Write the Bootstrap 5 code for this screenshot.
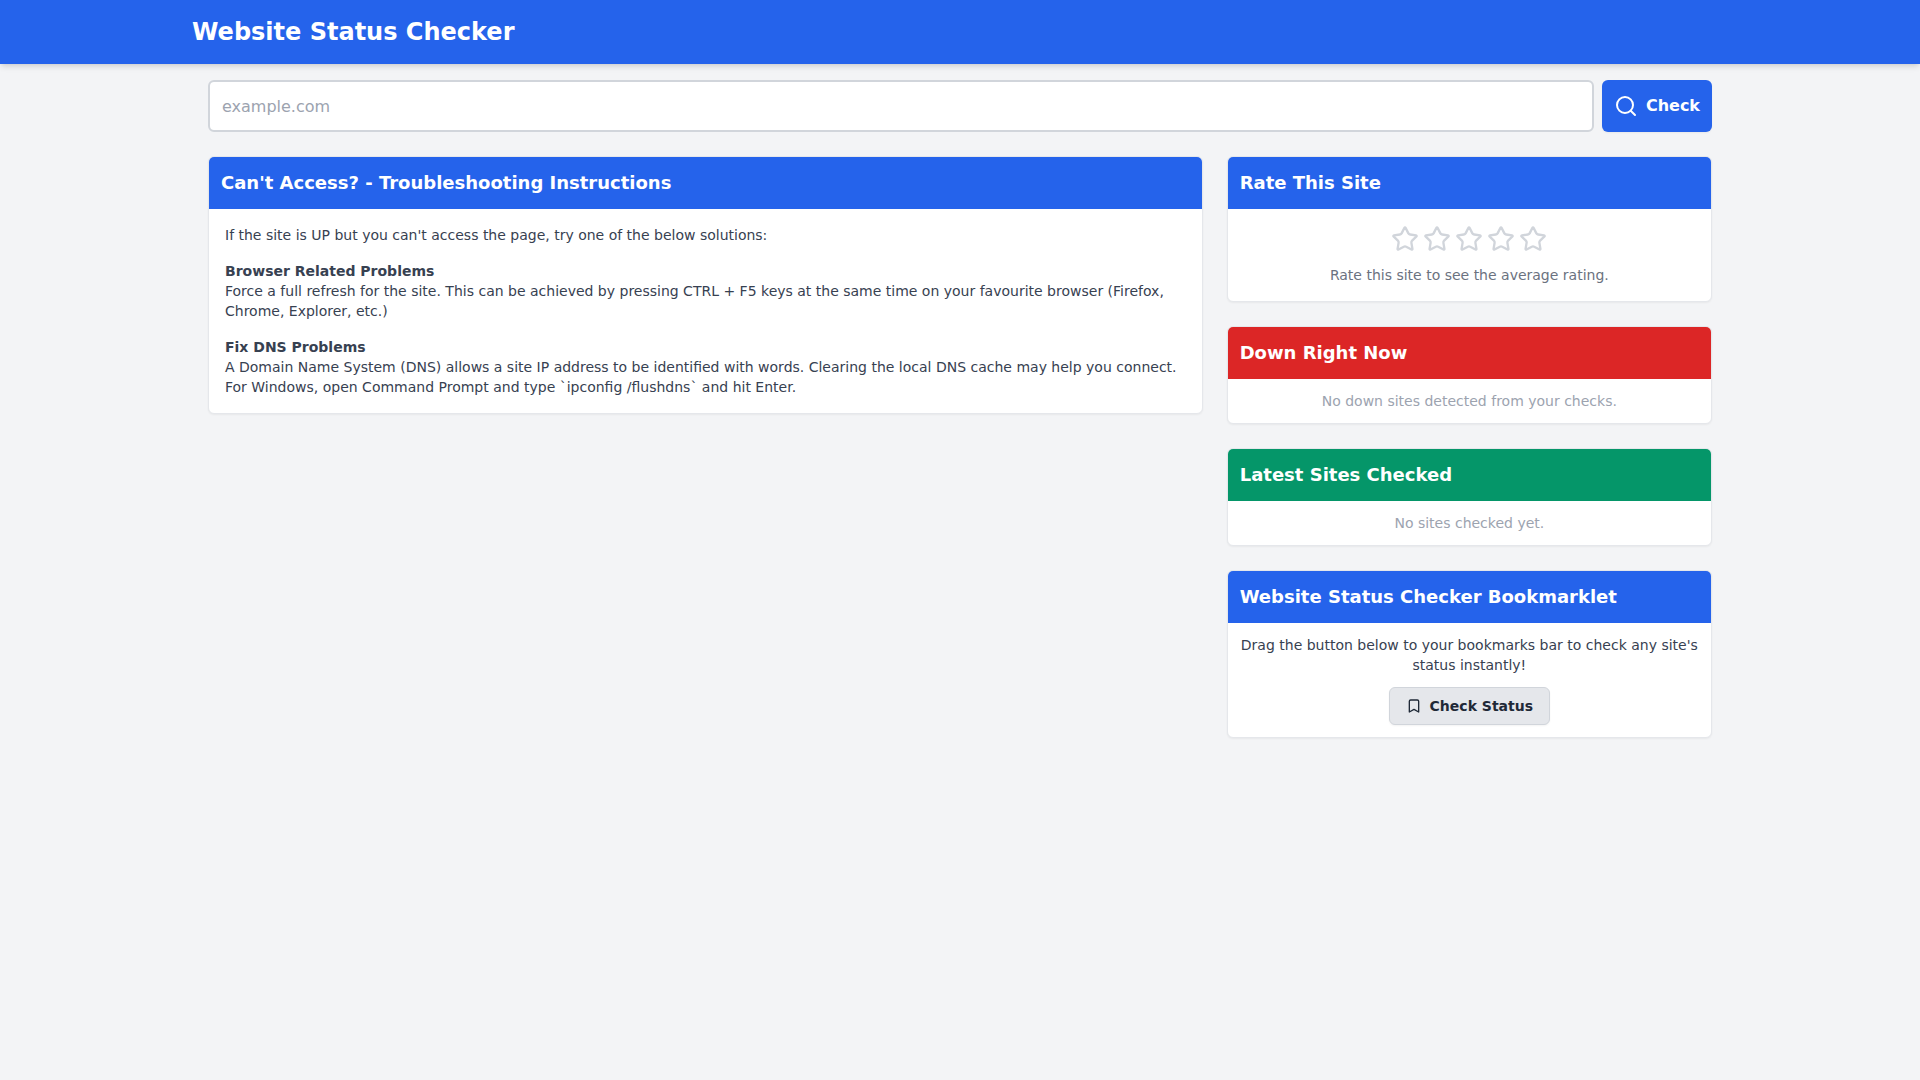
<!DOCTYPE html>
<html lang="en">
<head>
<meta charset="utf-8">
<meta name="viewport" content="width=device-width, initial-scale=1">
<title>Website Status Checker</title>
<link href="https://cdn.jsdelivr.net/npm/bootstrap@5.3.0/dist/css/bootstrap.min.css" rel="stylesheet">
<style>
:root { --brand: #2563eb; --line: #e5e7eb; }
body { background: #f3f4f6; color: #374151; font-family: "DejaVu Sans", sans-serif; font-size: 14px; line-height: 20px; }
.site-header { background: var(--brand); box-shadow: 0 4px 6px -1px rgba(0,0,0,.1), 0 2px 4px -2px rgba(0,0,0,.1); }
.site-wrap { max-width: 1536px; }
.site-title { font-size: 24px; line-height: 32px; }
.site-input { border: 2px solid #d1d5db; border-radius: 6px; padding: 12px; font-size: 16px; line-height: normal; }
.site-input::placeholder { color: #9ca3af; }
.btn-check-site { --bs-btn-bg: var(--brand); --bs-btn-color: #fff; --bs-btn-hover-bg: #1d4ed8; --bs-btn-hover-color: #fff; border: 0; border-radius: 6px; padding: 14px 12px; font-size: 16px; line-height: 24px; box-shadow: 0 1px 2px rgba(0,0,0,.05); }
.site-grid { --bs-gutter-x: 24px; --bs-gutter-y: 24px; }
.panel { --bs-card-border-color: var(--line); --bs-card-border-radius: 6px; --bs-card-inner-border-radius: 5px; --bs-card-color: #374151; box-shadow: 0 1px 2px rgba(0,0,0,.05); }
.panel-title { padding: 12px; font-size: 18px; line-height: 28px; color: #fff; background: var(--brand); border-radius: 5px 5px 0 0; }
.panel-title.is-down { background: #dc2626; }
.panel-title.is-latest { background: #059669; }
.pad-sm { padding: 12px; }
.star-row { gap: 4px; margin-bottom: 12px; color: #d1d5db; }
.star-btn { color: inherit; line-height: 0; }
.text-soft { color: #9ca3af; }
.text-hint { color: #6b7280; }
.btn-mark { --bs-btn-bg: #e5e7eb; --bs-btn-color: #1f2937; --bs-btn-border-color: #d1d5db; --bs-btn-hover-bg: #d1d5db; --bs-btn-hover-color: #1f2937; border-radius: 6px; padding: 8px 16px; font-size: 14px; line-height: 20px; box-shadow: 0 1px 2px rgba(0,0,0,.05); }
.line-icon { fill: none; stroke: currentColor; stroke-width: 2; stroke-linecap: round; stroke-linejoin: round; }
</style>
</head>
<body>
<svg class="d-none" aria-hidden="true">
  <symbol id="star" viewBox="0 0 24 24"><path d="M11.525 2.295a.53.53 0 0 1 .95 0l2.31 4.679a2.123 2.123 0 0 0 1.595 1.16l5.166.756a.53.53 0 0 1 .294.904l-3.736 3.638a2.123 2.123 0 0 0-.611 1.878l.882 5.14a.53.53 0 0 1-.771.56l-4.618-2.428a2.122 2.122 0 0 0-1.973 0L6.396 21.01a.53.53 0 0 1-.77-.56l.881-5.139a2.122 2.122 0 0 0-.611-1.879L2.16 9.795a.53.53 0 0 1 .294-.906l5.165-.755a2.122 2.122 0 0 0 1.597-1.16z"/></symbol>
</svg>
<header class="site-header py-3">
  <div class="site-wrap container-fluid px-0">
    <h1 class="site-title fw-bold text-white mb-0">Website Status Checker</h1>
  </div>
</header>
<main class="site-wrap container-fluid p-3">
  <form class="d-flex gap-2 mb-4" onsubmit="return false">
    <input class="form-control site-input" id="site" type="text" placeholder="example.com" aria-label="Website address">
    <button class="btn btn-check-site d-flex align-items-center gap-2 fw-bold" type="submit">
      <svg class="line-icon" width="24" height="24" viewBox="0 0 24 24" aria-hidden="true"><circle cx="11" cy="11" r="8"/><path d="m21 21-4.300-4.300"/></svg>
      Check
    </button>
  </form>
  <div class="row site-grid">
    <div class="col-lg-8">
      <section class="card panel">
        <h2 class="panel-title fw-bold mb-0">Can't Access? - Troubleshooting Instructions</h2>
        <div class="card-body">
          <p>If the site is UP but you can't access the page, try one of the below solutions:</p>
          <p><strong>Browser Related Problems</strong><br>Force a full refresh for the site. This can be achieved by pressing CTRL + F5 keys at the same time on your favourite browser (Firefox, Chrome, Explorer, etc.)</p>
          <p class="mb-0"><strong>Fix DNS Problems</strong><br>A Domain Name System (DNS) allows a site IP address to be identified with words. Clearing the local DNS cache may help you connect. For Windows, open Command Prompt and type `ipconfig /flushdns` and hit Enter.</p>
        </div>
      </section>
    </div>
    <div class="col-lg-4 d-flex flex-column gap-4">
      <section class="card panel">
        <h2 class="panel-title fw-bold mb-0">Rate This Site</h2>
        <div class="card-body text-center">
          <div class="star-row d-flex justify-content-center">
            <button class="star-btn btn p-0 border-0" type="button" aria-label="1 star"><svg class="line-icon" width="28" height="28"><use href="#star"/></svg></button>
            <button class="star-btn btn p-0 border-0" type="button" aria-label="2 stars"><svg class="line-icon" width="28" height="28"><use href="#star"/></svg></button>
            <button class="star-btn btn p-0 border-0" type="button" aria-label="3 stars"><svg class="line-icon" width="28" height="28"><use href="#star"/></svg></button>
            <button class="star-btn btn p-0 border-0" type="button" aria-label="4 stars"><svg class="line-icon" width="28" height="28"><use href="#star"/></svg></button>
            <button class="star-btn btn p-0 border-0" type="button" aria-label="5 stars"><svg class="line-icon" width="28" height="28"><use href="#star"/></svg></button>
          </div>
          <p class="text-hint mb-0">Rate this site to see the average rating.</p>
        </div>
      </section>
      <section class="card panel">
        <h2 class="panel-title is-down fw-bold mb-0">Down Right Now</h2>
        <p class="pad-sm text-soft text-center mb-0">No down sites detected from your checks.</p>
      </section>
      <section class="card panel">
        <h2 class="panel-title is-latest fw-bold mb-0">Latest Sites Checked</h2>
        <p class="pad-sm text-soft text-center mb-0">No sites checked yet.</p>
      </section>
      <section class="card panel">
        <h2 class="panel-title fw-bold mb-0">Website Status Checker Bookmarklet</h2>
        <div class="pad-sm text-center">
          <p class="mb-2 pb-1">Drag the button below to your bookmarks bar to check any site's status instantly!</p>
          <div class="d-flex justify-content-center">
            <a class="btn btn-mark d-flex align-items-center gap-2 fw-bold" href="#">
              <svg class="line-icon" width="16" height="16" viewBox="0 0 24 24" aria-hidden="true"><path d="m19 21-7-4-7 4V5a2 2 0 0 1 2-2h10a2 2 0 0 1 2 2v16z"/></svg>
              Check Status
            </a>
          </div>
        </div>
      </section>
    </div>
  </div>
</main>
<script src="https://cdn.jsdelivr.net/npm/bootstrap@5.3.0/dist/js/bootstrap.bundle.min.js"></script>
</body>
</html>
